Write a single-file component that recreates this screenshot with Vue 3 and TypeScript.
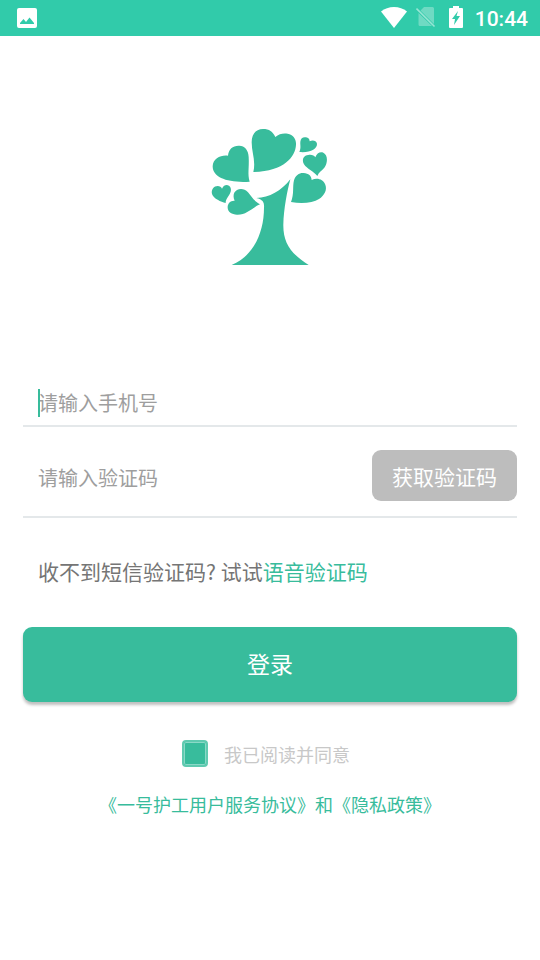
<script setup lang="ts">
import { ref } from 'vue'

const phone = ref('')
const code = ref('')
const agreed = ref(true)
const time = '10:44'
</script>

<template>
  <div class="screen">
    <header class="status">
      <svg class="picture" width="20" height="20" viewBox="0 0 20 20" aria-hidden="true">
        <path fill="#fff" fill-rule="evenodd" d="M2 0h16a2 2 0 0 1 2 2v16a2 2 0 0 1-2 2H2a2 2 0 0 1-2-2V2a2 2 0 0 1 2-2ZM3 16h14v-1l-4.500-5.500-3.500 4.500-2.500-3L3 15Z" />
      </svg>
      <div class="tray">
        <svg class="wifi" width="26" height="21" viewBox="0 0 26 21" aria-hidden="true">
          <path fill="#fff" d="M0 4.500Q5.500 0 13 0t13 4.500L13 21Z" />
        </svg>
        <svg class="sim" width="20" height="22" viewBox="0 0 20 22" aria-hidden="true">
          <path fill="#fff" opacity=".3" d="M8 1h8.500a1.500 1.500 0 0 1 1.500 1.500V18L4.500 4.500ZM2.500 7 16 20H4a1.500 1.500 0 0 1-1.500-1.500Z" />
          <path stroke="#fff" stroke-width="1.600" opacity=".5" d="m.5 2.500 18 18" />
        </svg>
        <svg class="battery" width="14" height="22" viewBox="0 0 14 22" aria-hidden="true">
          <path fill="#fff" fill-rule="evenodd" d="M4 0h6v2h3a1 1 0 0 1 1 1v18a1 1 0 0 1-1 1H1a1 1 0 0 1-1-1V3a1 1 0 0 1 1-1h3ZM9 5 3 13h3l-1 6 6-9H7.500Z" />
        </svg>
        <span class="time">{{ time }}</span>
      </div>
    </header>

    <main class="content">
      <svg class="logo" width="130" height="150" viewBox="0 0 390 450" role="img" aria-label="一号护工">
        <g fill="#38bc9c">
          <path d="M145 156C153 122 140 98 140 67C140 42 153 27 174 27C193 27 203 35 211 51C222 41 235 39 248 41C265 44 274 57 273 74C271 111 237 153 145 156Z" />
          <path d="M134 185C127 162 133 143 131 111C130 90 119 77 103 77C84 76 71 87 69 107C48 104 24 115 23 139C23 174 70 189 134 185Z" />
          <path d="M283 96C289 82 285 75 286 65C287 54 295 50 303 52C310 53 314 58 314 64C323 59 334 62 336 71C337 87 315 99 283 96Z" />
          <path d="M337 168C325 153 306 147 297 133C289 117 297 106 310 105C320 103 328 107 331 112C335 99 346 94 355 98C370 106 368 130 358 143C351 151 341 157 337 168Z" />
          <path d="M258 246C268 222 262 200 267 181C271 166 283 158 296 159C311 160 319 168 320 180C337 172 354 178 361 194C367 210 358 226 342 237C324 248 293 252 258 246Z" />
          <path d="M62 249C48 245 26 237 21 222C18 208 27 198 38 198C44 198 49 201 51 206C56 195 65 193 72 197C82 205 78 219 69 230C64 237 62 242 62 249Z" />
          <path d="M165 253C145 241 139 229 129 217C119 206 106 205 96 210C85 216 83 230 89 242C77 241 68 250 68 261C67 276 80 283 96 284C124 285 138 265 165 253Z" />
          <path d="M154 234C194 233 228 213 256 178C247 210 236 268 235 313C234 370 259 402 311 435H80C147 408 177 335 177 263C178 248 175 239 154 234Z" />
        </g>
      </svg>

      <form class="form" @submit.prevent>
        <div class="field phone">
          <span class="caret" aria-hidden="true"></span>
          <input v-model="phone" type="tel" placeholder="请输入手机号" aria-label="手机号" />
        </div>
        <div class="field code">
          <input v-model="code" type="text" inputmode="numeric" placeholder="请输入验证码" aria-label="验证码" />
          <button type="button" class="get-code">获取验证码</button>
        </div>
        <p class="hint">收不到短信验证码? 试试<a href="#voice">语音验证码</a></p>
        <button type="submit" class="login">登录</button>
        <label class="agree">
          <input v-model="agreed" type="checkbox" />
          <span>我已阅读并同意</span>
        </label>
        <p class="terms"><a href="#terms">《一号护工用户服务协议》</a>和<a href="#privacy">《隐私政策》</a></p>
      </form>
    </main>
  </div>
</template>

<style>
body {
  margin: 0;
  background: #fff;
}
</style>

<style scoped>
.screen {
  min-height: 100vh;
  background: #fff;
  font-family: "Noto Sans CJK SC", "Noto Sans", sans-serif;
}
.status {
  display: flex;
  align-items: center;
  justify-content: space-between;
  box-sizing: border-box;
  height: 36px;
  padding: 0 12px 0 17px;
  background: #31cbaa;
}
.tray {
  display: flex;
  align-items: flex-start;
  height: 24px;
}
.wifi {
  margin-top: 1px;
}
.sim {
  margin-left: 9px;
}
.battery {
  margin-left: 13px;
}
.time {
  margin-left: 12px;
  color: #fff;
  font: 500 21px/26px Roboto, sans-serif;
}
.content {
  display: flex;
  flex-direction: column;
  padding: 84px 23px 40px;
}
.logo {
  align-self: center;
}
.form {
  display: flex;
  flex-direction: column;
  margin-top: 108px;
}
.field {
  position: relative;
  display: flex;
  align-items: center;
  box-sizing: border-box;
  padding-left: 15px;
  border-bottom: 2px solid #e4e8ea;
}
.field input {
  flex: 1;
  min-width: 0;
  height: 30px;
  padding: 0;
  border: 0;
  outline: 0;
  background: transparent;
  color: #555;
  font: 20px/30px "Noto Sans CJK SC", sans-serif;
}
.field input::placeholder {
  color: #9e9e9e;
  opacity: 1;
}
.phone {
  height: 49px;
  padding-top: 2px;
}
.caret {
  position: absolute;
  left: 15px;
  top: 11px;
  width: 2px;
  height: 28px;
  background: #38bc9c;
}
.code {
  align-items: flex-start;
  height: 91px;
  padding-top: 23px;
}
.code input {
  margin-top: 13px;
}
button {
  padding: 0;
  border: 0;
  color: #fff;
  font-family: inherit;
  cursor: pointer;
}
.get-code {
  width: 145px;
  height: 51px;
  border-radius: 9px;
  background: #bdbdbd;
  font-size: 21px;
}
.hint {
  margin: 37px 0 0 15px;
  color: #757575;
  font-size: 21px;
  line-height: 32px;
}
a {
  color: #38bc9c;
  text-decoration: none;
}
.login {
  height: 75px;
  margin-top: 40px;
  padding-bottom: 4px;
  border-radius: 9px;
  background: #38bc9c;
  box-shadow: 0 3px 3px rgba(0, 0, 0, 0.25);
  font-size: 23px;
}
.agree {
  display: flex;
  align-items: flex-start;
  align-self: center;
  gap: 16px;
  margin: 38px 8px 0 0;
  color: #c8c8c8;
  font-size: 18px;
  line-height: 28px;
}
.agree input {
  appearance: none;
  width: 26px;
  height: 27px;
  margin: 0;
  border: 2px solid #60cab0;
  border-radius: 4px;
  background: #fff;
}
.agree input:checked {
  background: #38bc9c;
  box-shadow: inset 0 0 0 1px #8bd9c7;
}
.terms {
  margin: 22px 0 0;
  color: #38bc9c;
  font-size: 18px;
  line-height: 28px;
  text-align: center;
}
</style>
